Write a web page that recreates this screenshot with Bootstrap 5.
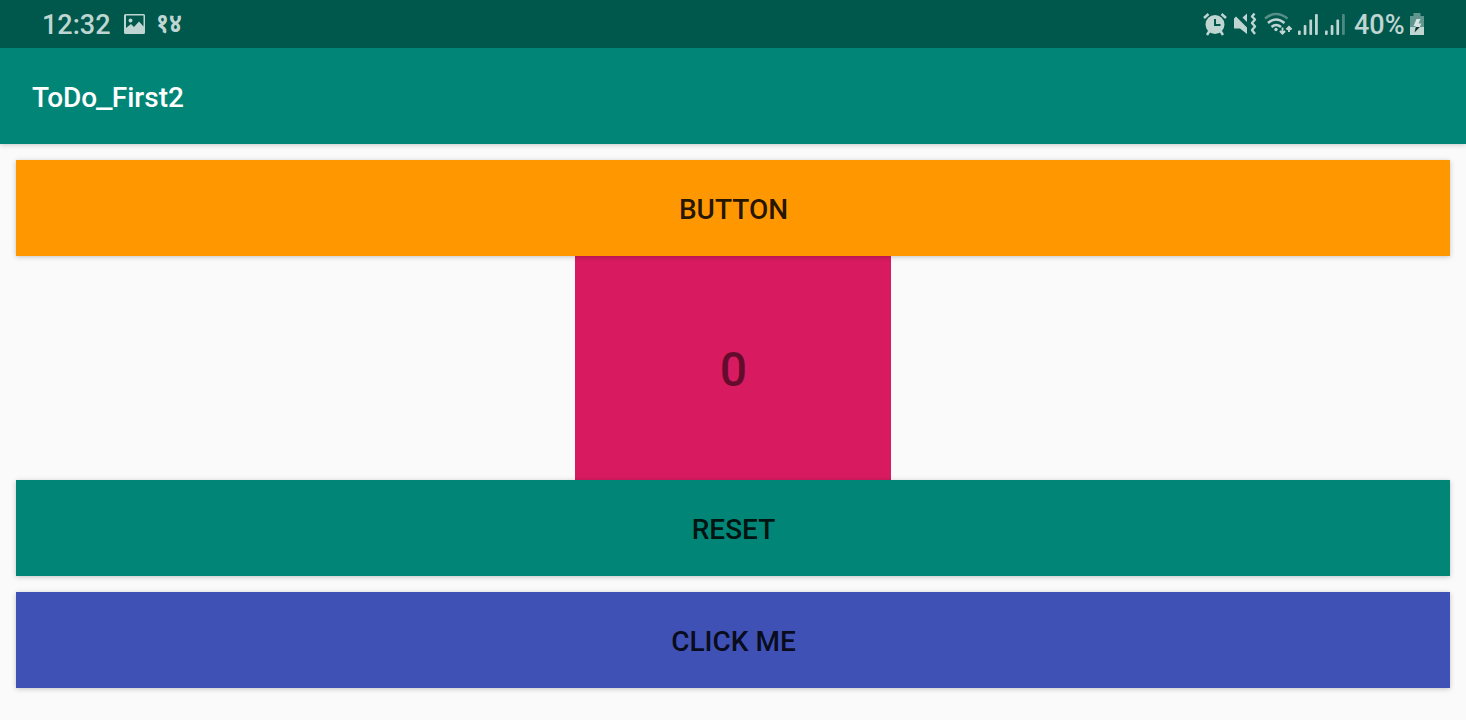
<!DOCTYPE html>
<html lang="en">
<head>
<meta charset="utf-8">
<meta name="viewport" content="width=device-width, initial-scale=1">
<title>ToDo_First2</title>
<link href="https://cdn.jsdelivr.net/npm/bootstrap@5.3.0/dist/css/bootstrap.min.css" rel="stylesheet">
<style>
body{font-family:Roboto,"Noto Sans",sans-serif;background:#fafafa;height:720px;overflow:hidden}
.status-bar{height:48px;background:#00574b;color:#bfd5d2;padding:2px 42px 0 42px;font-size:27px;font-weight:500;line-height:46px;position:relative;z-index:2}
.status-bar svg{display:block;flex:none;height:46px;margin-top:-4px}
.clock{width:69px;white-space:nowrap}
.status-bar .days{font-size:23px;margin:-2px 0 0 10px;font-weight:700;transform:scaleY(1.16);transform-origin:50% 50%}
.app-bar{height:96px;background:#008577;color:#fff;padding:4px 32px 0;font-size:28px;font-weight:500;box-shadow:0 1px 5px rgba(0,0,0,.2);position:relative;z-index:1}
.underscore{display:inline-block;transform:scaleX(1.32);margin:0 1px}
.app-btn{height:96px;border:0;border-radius:0;font-size:28px;font-weight:500;color:rgba(0,0,0,.87);padding:4px 0 0 1px;box-shadow:0 1px 5px rgba(0,0,0,.22);position:relative}
.orange{background:#ff9800}.teal{background:#008577}.indigo{background:#3f51b5}
.counter{width:316px;height:224px;background:#d81b60;color:rgba(0,0,0,.54);font-size:48px;font-weight:500;padding:3px 0 0 1px}
.ic-image{margin-left:13px}
.ic-mute{margin-left:7px}
.ic-wifi{margin-left:5px}
.ic-signal{margin-left:5px}
.ic-signal-b{margin-left:7px}
.percent{margin-left:9px;width:51px}
.ic-battery{margin-left:5px}
</style>
</head>
<body>
<header class="status-bar d-flex align-items-center justify-content-between">
  <div class="d-flex align-items-center">
    <span class="clock">12:32</span>
    <svg class="ic-image" width="22" viewBox="0 0 22 46"><path fill="#bfd5d2" fill-rule="evenodd" d="M1.500 14h18Q21 14 21 15.500v17Q21 34 19.500 34h-18Q0 34 0 32.500v-17Q0 14 1.500 14zM2 15.500v12.500l5-4 3 3 5-5.500 4.500 5v-11zM6.500 18.500a2 2 0 1 1 0 4 2 2 0 0 1 0-4z"/></svg>
    <span class="days">१४</span>
  </div>
  <div class="d-flex align-items-center">
    <svg width="24" viewBox="0 0 24 46" fill="none" stroke="#bfd5d2" stroke-width="2.500"><circle cx="12" cy="24.500" r="9.500" fill="#bfd5d2" stroke="none"/><path d="M1 18l4.500-4M23 18l-4.500-4M6.500 31L4 35M17.500 31L20 35"/><path d="M12 19v6h5.500" stroke="#00574b" stroke-width="2"/></svg>
    <svg class="ic-mute" width="24" viewBox="0 0 24 46"><path fill="#bfd5d2" d="M0 18.500L2 16.500l11 11V34l-7-5.500H0zM8.500 17.500l4.500-4V22z"/><path d="M20.500 13.500l-2.500 3 3 3-3 3.500 3 3.500-3 3.500 3 4" fill="none" stroke="#bfd5d2" stroke-width="2.400" stroke-linejoin="round"/></svg>
    <svg class="ic-wifi" width="30" viewBox="0 0 30 46" fill="none" stroke="#bfd5d2" stroke-width="2.500"><path d="M2 18.500Q13 9.500 24.500 18.500" opacity=".45"/><path d="M5 23Q13 16 21.500 23M8.500 27Q13 23 18 27"/><circle cx="13" cy="29.500" r="1.700" fill="#bfd5d2" stroke="none"/><path d="M19.500 27.500v6M16.900 31l2.600 2.600 2.600-2.600M26 32v-5M23.400 29.500l2.600-2.600 2.600 2.600" stroke-width="1.900"/></svg>
    <svg class="ic-signal" width="20" viewBox="0 0 20 46" fill="#bfd5d2"><rect y="30.500" width="2.700" height="4.500" rx="1"/><rect x="5.700" y="25" width="2.700" height="10" rx="1"/><rect x="11.400" y="19.500" width="2.700" height="15.500" rx="1"/><rect x="17" y="14" width="2.800" height="21" rx="1"/></svg>
    <svg class="ic-signal-b" width="20" viewBox="0 0 20 46" fill="#bfd5d2"><rect y="30.500" width="2.700" height="4.500" rx="1"/><rect x="5.700" y="25" width="2.700" height="10" rx="1"/><rect x="11.400" y="19.500" width="2.700" height="15.500" rx="1"/><rect x="17" y="14" width="2.800" height="21" rx="1" opacity=".4"/></svg>
    <span class="percent">40%</span>
    <svg class="ic-battery" width="14" viewBox="0 0 14 46"><path fill="#5f968e" d="M3.500 13h7v3H14v11H0V16h3.500z"/><path fill="#bfd5d2" d="M0 27h14v8H0z"/><path fill="#d5e4e1" d="M6.500 19h4l-2 4.500h3L9.700 27H5.500v-1h-2z"/><path fill="#07372f" d="M5.800 27h4l-5.300 5.500z"/></svg>
  </div>
</header>
<nav class="app-bar d-flex align-items-center"><span>ToDo<span class="underscore">_</span>First2</span></nav>
<main class="d-flex flex-column px-3 pt-3">
  <button class="app-btn orange w-100" type="button">BUTTON</button>
  <div class="counter d-flex align-items-center justify-content-center align-self-center">0</div>
  <button class="app-btn teal w-100 mb-3" type="button">RESET</button>
  <button class="app-btn indigo w-100" type="button">CLICK ME</button>
</main>
<script src="https://cdn.jsdelivr.net/npm/bootstrap@5.3.0/dist/js/bootstrap.bundle.min.js"></script>
</body>
</html>
